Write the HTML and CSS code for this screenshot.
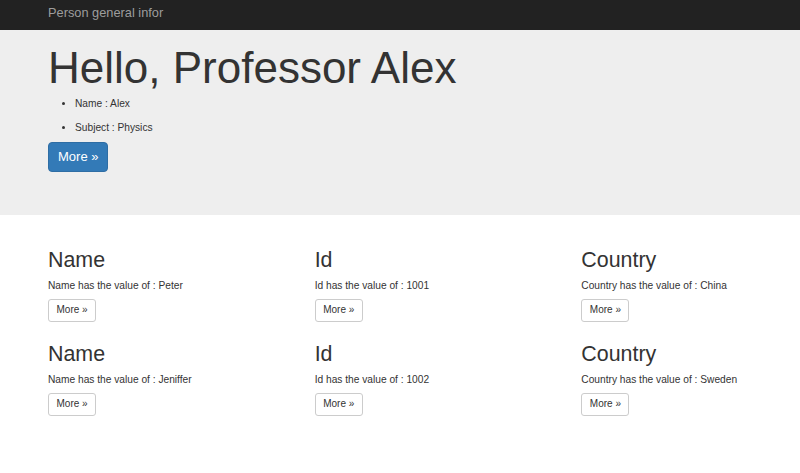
FILE: index.html
```html
<!DOCTYPE html>
<html lang="en">
<head>
<meta charset="utf-8">
<title>Person general infor</title>
<link rel="stylesheet" href="styles.css">
</head>
<body>
<nav class="navbar">
  <a class="brand" href="#">Person general infor</a>
</nav>
<section class="jumbotron">
  <h1>Hello, Professor Alex</h1>
  <ul class="facts">
    <li>Name : Alex</li>
    <li>Subject : Physics</li>
  </ul>
  <a class="btn btn-primary" href="#">More &raquo;</a>
</section>
<main class="grid">
  <div class="col">
    <h2>Name</h2>
    <p>Name has the value of : Peter</p>
    <a class="btn btn-default" href="#">More &raquo;</a>
  </div>
  <div class="col">
    <h2>Id</h2>
    <p>Id has the value of : 1001</p>
    <a class="btn btn-default" href="#">More &raquo;</a>
  </div>
  <div class="col">
    <h2>Country</h2>
    <p>Country has the value of : China</p>
    <a class="btn btn-default" href="#">More &raquo;</a>
  </div>
  <div class="col">
    <h2>Name</h2>
    <p>Name has the value of : Jeniffer</p>
    <a class="btn btn-default" href="#">More &raquo;</a>
  </div>
  <div class="col">
    <h2>Id</h2>
    <p>Id has the value of : 1002</p>
    <a class="btn btn-default" href="#">More &raquo;</a>
  </div>
  <div class="col">
    <h2>Country</h2>
    <p>Country has the value of : Sweden</p>
    <a class="btn btn-default" href="#">More &raquo;</a>
  </div>
</main>
</body>
</html>
```
FILE: styles.css
```css
html, body {
  margin: 0;
  padding: 0;
}
body {
  font-family: "Liberation Sans", Arial, sans-serif;
  font-size: 10px;
  line-height: 1.43;
  color: #333;
  background: #fff;
}
.navbar {
  height: 30px;
  background: #222;
  display: flex;
  align-items: center;
  padding: 0 48px;
}
.brand {
  color: #9d9d9d;
  text-decoration: none;
  font-size: 12.8px;
  line-height: 1;
  margin-top: -3px;
}
.jumbotron {
  background: #eee;
  padding: 14px 48px 43px;
}
.jumbotron h1 {
  margin: 0;
  font-size: 44px;
  font-weight: 400;
  line-height: 1.1;
  color: #333;
}
.facts {
  margin: 5px 0 6px;
  padding-left: 27px;
  list-style: disc;
  font-size: 10.2px;
}
.facts li {
  line-height: 14.3px;
  margin-bottom: 9.7px;
}
.facts li:last-child {
  margin-bottom: 0;
}
.btn {
  display: inline-block;
  text-decoration: none;
  border: 1px solid transparent;
  box-sizing: border-box;
  white-space: nowrap;
  text-align: center;
}
.btn-primary {
  background: #337ab7;
  border-color: #2e6da4;
  color: #fff;
  font-size: 13px;
  line-height: 18px;
  padding: 5px 9px;
  border-radius: 4px;
}
.grid {
  display: grid;
  grid-template-columns: repeat(3, 1fr);
  column-gap: 96px;
  padding: 20px 48px 0;
}
.col h2 {
  margin: 14px 0 7px;
  font-size: 21.4px;
  font-weight: 400;
  line-height: 1.1;
  color: #333;
}
.col p {
  margin: 0 0 5px;
  font-size: 10.2px;
}
.btn-default {
  background: #fff;
  border-color: #ccc;
  color: #333;
  font-size: 10px;
  line-height: 14.3px;
  padding: 3.3px 7.5px;
  border-radius: 3px;
  margin-bottom: 7px;
}
```
